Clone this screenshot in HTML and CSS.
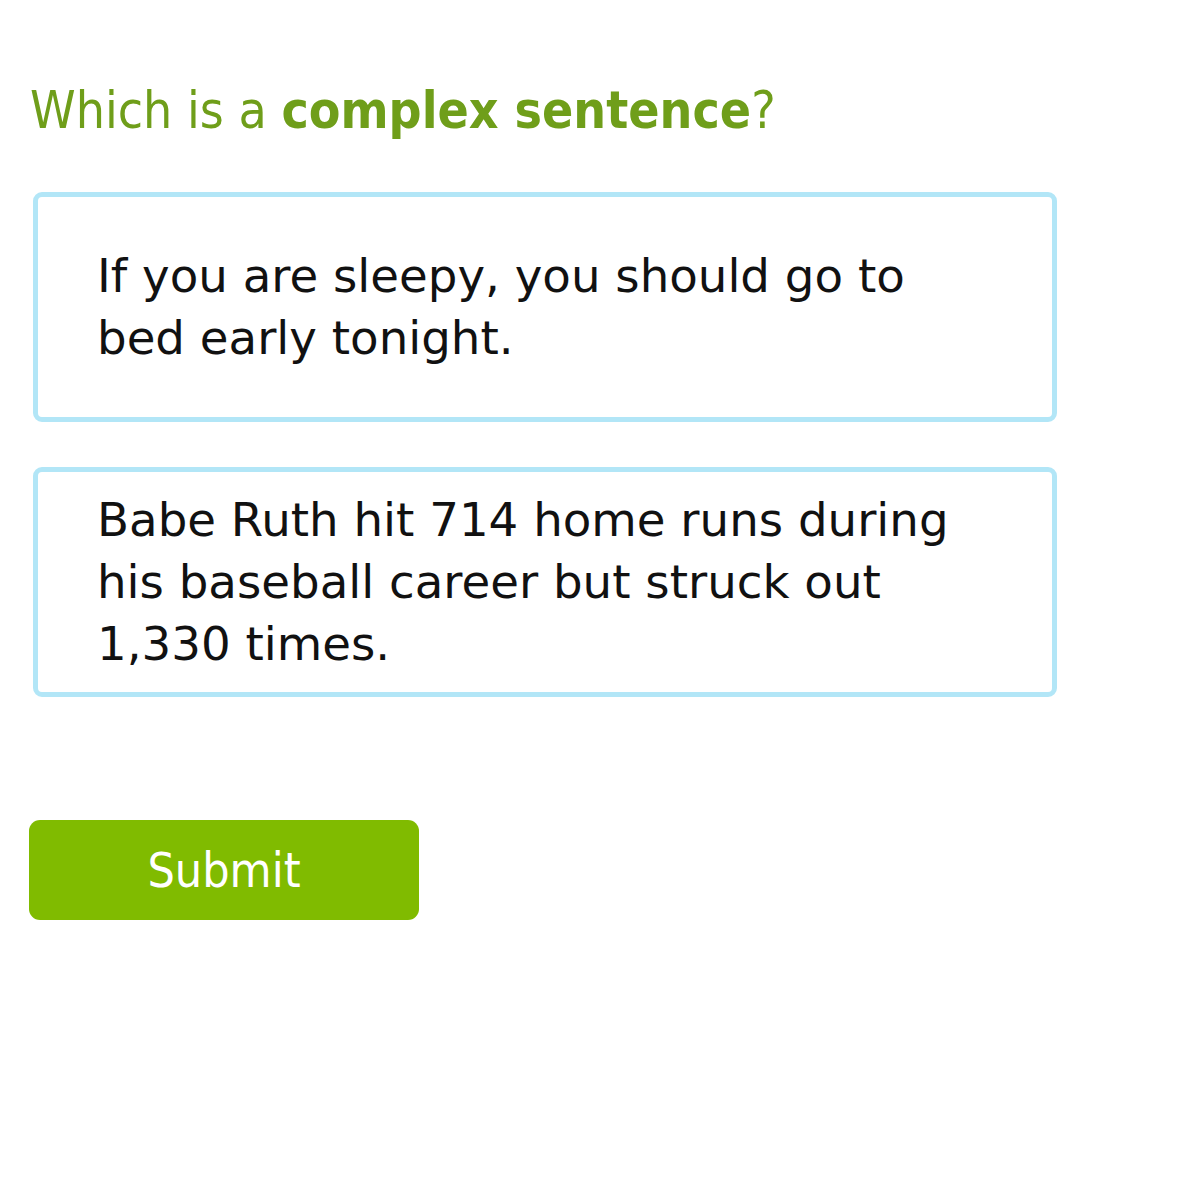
FILE: index.html
```html
<!DOCTYPE html>
<html>
<head>
<meta charset="utf-8">
<link rel="stylesheet" href="styles.css">
</head>
<body>
<main class="page">
  <h1 class="question">Which is a <strong>complex sentence</strong>?</h1>
  <div class="choices">
    <div class="choice"><p>If you are sleepy, you should go to bed early tonight.</p></div>
    <div class="choice"><p>Babe Ruth hit 714 home runs during his baseball career but struck out 1,330 times.</p></div>
  </div>
  <button class="submit">Submit</button>
</main>
</body>
</html>
```
FILE: styles.css
```css
html, body {
  margin: 0;
  padding: 0;
  background: #ffffff;
}
body {
  font-family: "DejaVu Sans", Verdana, sans-serif;
}
.page {
  display: flex;
  flex-direction: column;
  align-items: flex-start;
  padding: 78px 0 0 30px;
}
.question {
  margin: 0;
  font-family: "DejaVu Sans Condensed", "DejaVu Sans", Verdana, sans-serif;
  font-stretch: condensed;
  font-size: 51.3px;
  font-weight: normal;
  color: #6f9e1a;
  line-height: 64px;
}
.question strong {
  font-weight: bold;
  color: #6f9e1a;
}
.choices {
  display: flex;
  flex-direction: column;
  gap: 45px;
  margin-top: 50px;
  margin-left: 3px;
}
.choice {
  box-sizing: border-box;
  width: 1024px;
  height: 230px;
  border: 5px solid #b2e6f7;
  border-radius: 9px;
  display: flex;
  align-items: center;
  padding: 0 60px 0 59px;
}
.choice p {
  margin: 0;
  font-size: 46.7px;
  line-height: 62px;
  color: #111111;
}
.submit {
  margin-top: 123px;
  margin-left: -1px;
  width: 390px;
  height: 100px;
  border: none;
  border-radius: 11px;
  background: #80bb00;
  color: #ffffff;
  font-family: "DejaVu Sans Condensed", "DejaVu Sans", Verdana, sans-serif;
  font-stretch: condensed;
  font-size: 48px;
  padding: 0;
}
```
